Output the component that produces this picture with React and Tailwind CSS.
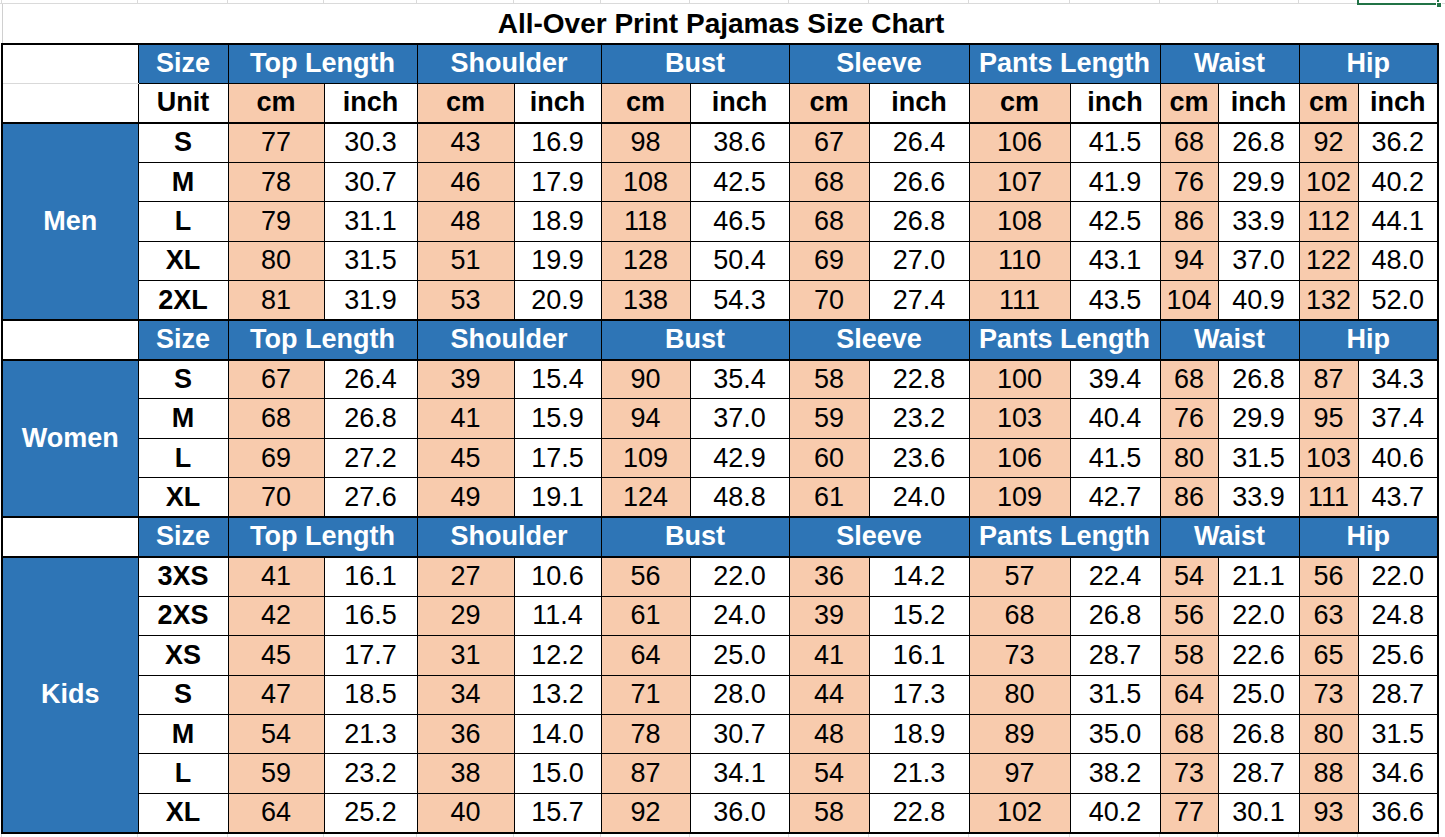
import React from "react";

const groups = ["Top Length", "Shoulder", "Bust", "Sleeve", "Pants Length", "Waist", "Hip"];

const men = [
  ["S", "77", "30.3", "43", "16.9", "98", "38.6", "67", "26.4", "106", "41.5", "68", "26.8", "92", "36.2"],
  ["M", "78", "30.7", "46", "17.9", "108", "42.5", "68", "26.6", "107", "41.9", "76", "29.9", "102", "40.2"],
  ["L", "79", "31.1", "48", "18.9", "118", "46.5", "68", "26.8", "108", "42.5", "86", "33.9", "112", "44.1"],
  ["XL", "80", "31.5", "51", "19.9", "128", "50.4", "69", "27.0", "110", "43.1", "94", "37.0", "122", "48.0"],
  ["2XL", "81", "31.9", "53", "20.9", "138", "54.3", "70", "27.4", "111", "43.5", "104", "40.9", "132", "52.0"],
];

const women = [
  ["S", "67", "26.4", "39", "15.4", "90", "35.4", "58", "22.8", "100", "39.4", "68", "26.8", "87", "34.3"],
  ["M", "68", "26.8", "41", "15.9", "94", "37.0", "59", "23.2", "103", "40.4", "76", "29.9", "95", "37.4"],
  ["L", "69", "27.2", "45", "17.5", "109", "42.9", "60", "23.6", "106", "41.5", "80", "31.5", "103", "40.6"],
  ["XL", "70", "27.6", "49", "19.1", "124", "48.8", "61", "24.0", "109", "42.7", "86", "33.9", "111", "43.7"],
];

const kids = [
  ["3XS", "41", "16.1", "27", "10.6", "56", "22.0", "36", "14.2", "57", "22.4", "54", "21.1", "56", "22.0"],
  ["2XS", "42", "16.5", "29", "11.4", "61", "24.0", "39", "15.2", "68", "26.8", "56", "22.0", "63", "24.8"],
  ["XS", "45", "17.7", "31", "12.2", "64", "25.0", "41", "16.1", "73", "28.7", "58", "22.6", "65", "25.6"],
  ["S", "47", "18.5", "34", "13.2", "71", "28.0", "44", "17.3", "80", "31.5", "64", "25.0", "73", "28.7"],
  ["M", "54", "21.3", "36", "14.0", "78", "30.7", "48", "18.9", "89", "35.0", "68", "26.8", "80", "31.5"],
  ["L", "59", "23.2", "38", "15.0", "87", "34.1", "54", "21.3", "97", "38.2", "73", "28.7", "88", "34.6"],
  ["XL", "64", "25.2", "40", "15.7", "92", "36.0", "58", "22.8", "102", "40.2", "77", "30.1", "93", "36.6"],
];

const cell = "border border-black p-0 text-center align-middle whitespace-nowrap";

function HeaderRow({ labelBottomGray }) {
  return (
    <tr className="h-[39.45px]">
      <td className={`${cell} border-t-2 bg-white ${labelBottomGray ? "border-b-[#d9d9d9]" : "border-b-2"}`}></td>
      <td className={`${cell} border-t-2 bg-[#2e75b6] text-white font-bold ${labelBottomGray ? "" : "border-b-2"}`}>Size</td>
      {groups.map((g) => (
        <td
          key={g}
          colSpan={2}
          className={`${cell} border-t-2 bg-[#2e75b6] text-white font-bold ${labelBottomGray ? "" : "border-b-2"}`}
        >
          {g}
        </td>
      ))}
    </tr>
  );
}

function UnitRow() {
  const cells = [];
  for (let i = 0; i < 7; i++) {
    cells.push(
      <td key={`c${i}`} className={`${cell} border-b-2 bg-[#f8cbad] font-bold`}>cm</td>
    );
    cells.push(
      <td key={`i${i}`} className={`${cell} border-b-2 bg-white font-bold`}>inch</td>
    );
  }
  return (
    <tr className="h-[39.45px]">
      <td className={`${cell} border-b-2 bg-white`}></td>
      <td className={`${cell} border-b-2 bg-white font-bold`}>Unit</td>
      {cells}
    </tr>
  );
}

function Section({ label, rows }) {
  return rows.map((r, idx) => (
    <tr key={idx} className="h-[39.45px]">
      {idx === 0 && (
        <td
          rowSpan={rows.length}
          className={`${cell} bg-[#2e75b6] text-white font-bold`}
        >
          {label}
        </td>
      )}
      <td className={`${cell} bg-white font-bold`}>{r[0]}</td>
      {r.slice(1).map((v, i) => (
        <td key={i} className={`${cell} ${i % 2 === 0 ? "bg-[#f8cbad]" : "bg-white"}`}>
          {v}
        </td>
      ))}
    </tr>
  ));
}

function GridStrip() {
  const widths = [
    "w-[2px]", "w-[136px]", "w-[90px]", "w-[96px]", "w-[93px]", "w-[97px]", "w-[87px]", "w-[89px]",
    "w-[99px]", "w-[80px]", "w-[100px]", "w-[101px]", "w-[90px]", "w-[58px]", "w-[81px]", "w-[59px]", "w-[81px]",
  ];
  return (
    <div className="flex h-full">
      {widths.map((w, i) => (
        <div key={i} className={`${w} shrink-0 h-full border-r border-[#dadada]`}></div>
      ))}
    </div>
  );
}

export default function App() {
  return (
    <div
      className="relative w-[1445px] h-[837px] bg-white overflow-hidden text-black"
      style={{ fontFamily: '"Liberation Sans", Arial, sans-serif' }}
    >
      <div className="h-[4px] border-b border-[#dadada]">
        <GridStrip />
      </div>
      <div className="h-[39px] ml-[2px] w-[1437px] border-l border-[#d0d0d0] flex items-center justify-center">
        <span className="text-[28px] font-bold leading-none">All-Over Print Pajamas Size Chart</span>
      </div>
      <table className="ml-[1px] table-fixed border-collapse border-2 border-black text-[27px] leading-none">
        <colgroup>
          <col className="w-[136px]" />
          <col className="w-[90px]" />
          <col className="w-[96px]" />
          <col className="w-[93px]" />
          <col className="w-[97px]" />
          <col className="w-[87px]" />
          <col className="w-[89px]" />
          <col className="w-[99px]" />
          <col className="w-[80px]" />
          <col className="w-[100px]" />
          <col className="w-[101px]" />
          <col className="w-[90px]" />
          <col className="w-[58px]" />
          <col className="w-[81px]" />
          <col className="w-[59px]" />
          <col className="w-[80px]" />
        </colgroup>
        <tbody>
          <HeaderRow labelBottomGray />
          <UnitRow />
          <Section label="Men" rows={men} />
          <HeaderRow />
          <Section label="Women" rows={women} />
          <HeaderRow />
          <Section label="Kids" rows={kids} />
        </tbody>
      </table>
      <div className="h-[10px]">
        <GridStrip />
      </div>
      <div className="absolute left-[1357px] top-[-3px] w-[82px] h-[8px] border-2 border-[#217346]"></div>
      <div className="absolute left-[1436px] top-[2px] w-[6px] h-[6px] bg-[#217346] border border-white"></div>
    </div>
  );
}
